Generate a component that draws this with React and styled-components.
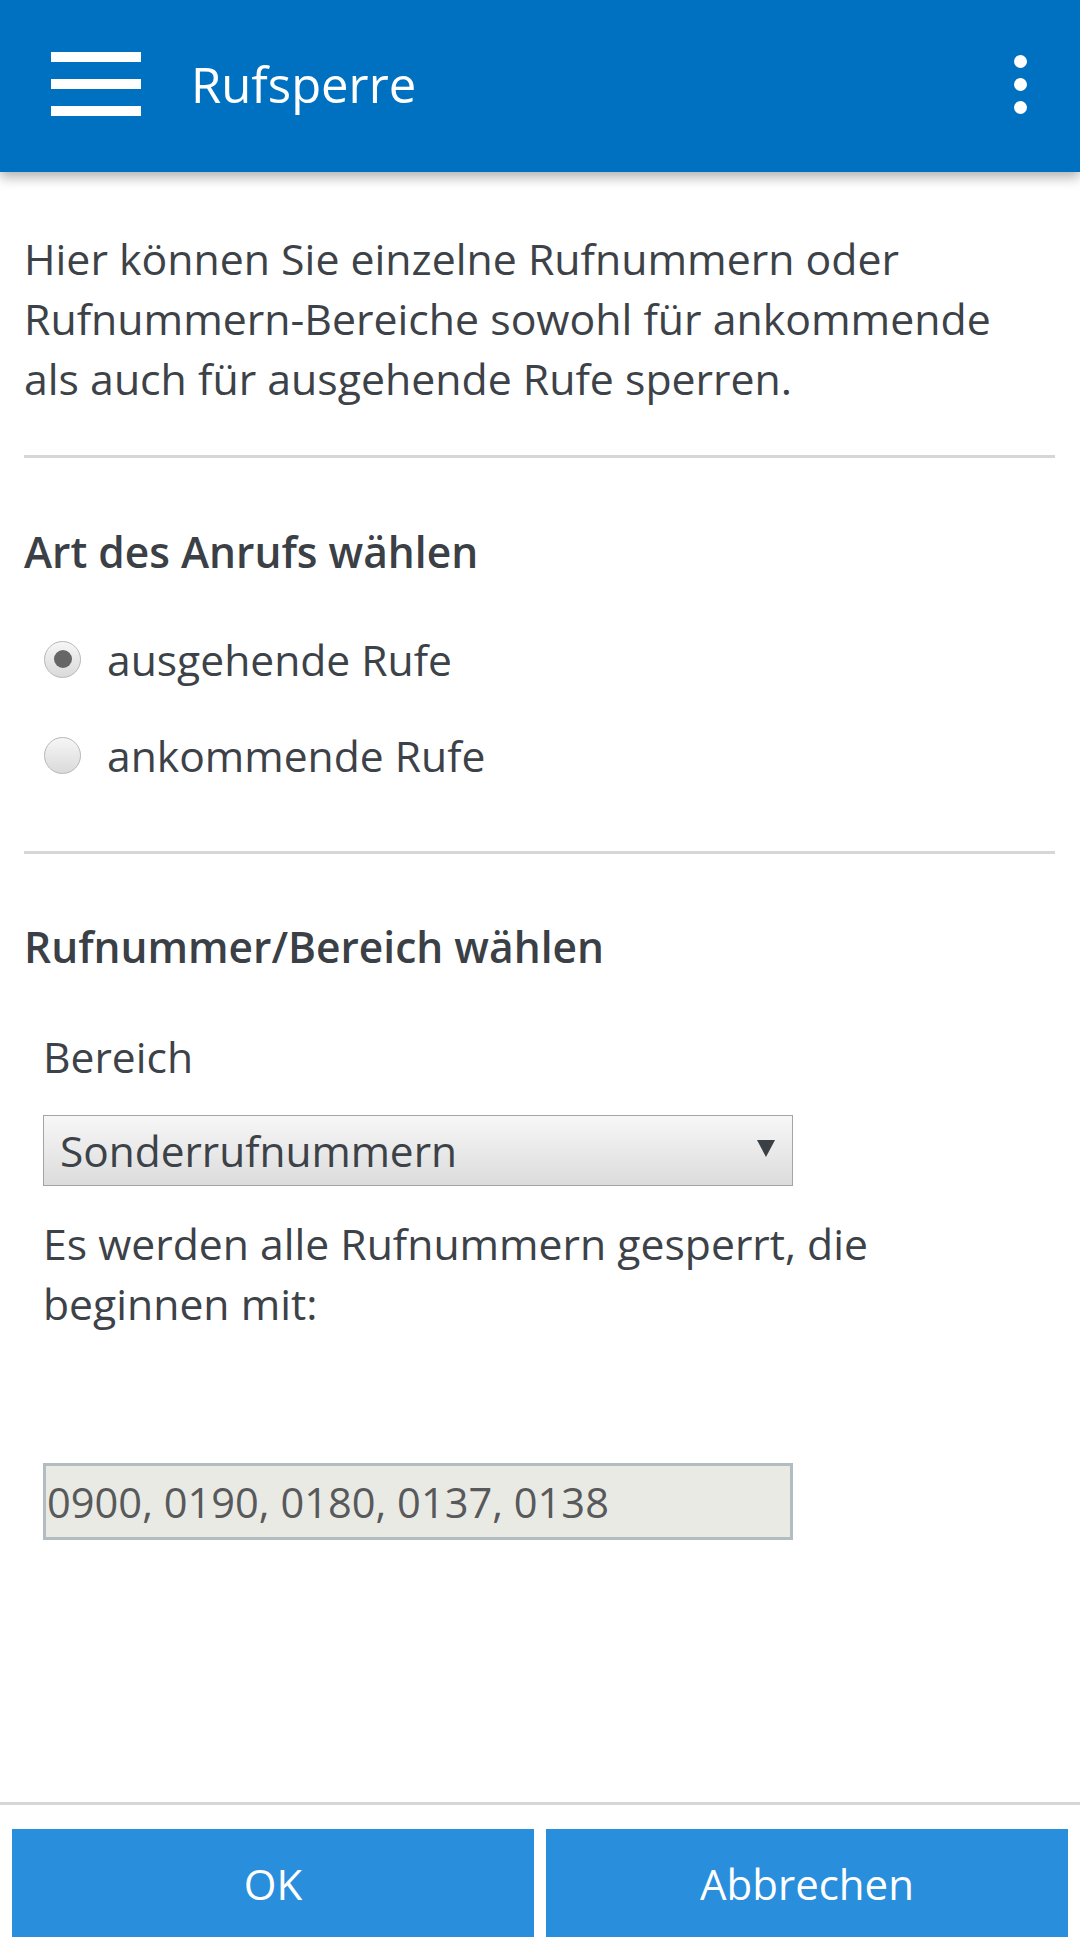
import React from 'react'
import styled, { createGlobalStyle } from 'styled-components'

const GlobalStyle = createGlobalStyle`
  html, body {
    margin: 0;
    padding: 0;
    background: #fff;
  }
  body {
    font-family: 'Open Sans', 'Noto Sans', sans-serif;
    color: #3c4247;
  }
`

const Page = styled.div`
  display: flex;
  flex-direction: column;
  min-height: 100vh;
  width: 100%;
`

const TopBar = styled.div`
  position: relative;
  z-index: 2;
  height: 172px;
  box-sizing: border-box;
  padding: 0 53px 4px 51px;
  display: flex;
  align-items: center;
  background: #0070c0;
  box-shadow: 0 5px 12px rgba(0, 0, 0, 0.32);
`

const Burger = styled.div`
  display: flex;
  flex-direction: column;
  gap: 17px;
  width: 90px;
`

const BurgerLine = styled.span`
  display: block;
  height: 10px;
  background: #fff;
`

const Title = styled.div`
  flex: 1;
  margin-left: 50px;
  font-size: 49px;
  line-height: 60px;
  color: #fff;
`

const Dots = styled.div`
  display: flex;
  flex-direction: column;
  gap: 10px;
`

const Dot = styled.span`
  display: block;
  width: 13px;
  height: 13px;
  border-radius: 50%;
  background: #fff;
`

const Content = styled.div`
  flex: 1;
  padding: 0 25px 0 24px;
`

const Intro = styled.p`
  margin: 57px 0 0;
  font-size: 42.8px;
  line-height: 60px;
`

const Divider = styled.div`
  height: 3px;
  background: #d6d6d6;
  margin-top: ${p => p.top}px;
`

const Heading = styled.h2`
  margin: ${p => p.top}px 0 0;
  font-size: 42.5px;
  line-height: 60px;
  font-weight: 600;
  color: #3a4045;
`

const RadioList = styled.div`
  margin-top: 29px;
  padding-left: 20px;
`

const RadioRow = styled.label`
  display: flex;
  align-items: center;
  height: 96px;
  font-size: 42.6px;
  line-height: 60px;
`

const RadioCircle = styled.span`
  position: relative;
  width: 37px;
  height: 37px;
  box-sizing: border-box;
  border-radius: 50%;
  border: 1px solid #b8b8b8;
  background: linear-gradient(#f6f6f6, #dadada);
  margin-right: 26px;
  flex-shrink: 0;

  &::after {
    content: '';
    display: ${p => (p.checked ? 'block' : 'none')};
    position: absolute;
    left: 50%;
    top: 50%;
    width: 18px;
    height: 18px;
    margin: -9px 0 0 -9px;
    border-radius: 50%;
    background: #666;
  }
`

const Form = styled.div`
  padding-left: 19px;
`

const FieldLabel = styled.div`
  margin-top: 49px;
  font-size: 42.6px;
  line-height: 60px;
`

const Select = styled.div`
  margin-top: 29px;
  width: 750px;
  height: 71px;
  box-sizing: border-box;
  border: 1px solid #a4a4a4;
  background: linear-gradient(#f7f7f7, #dcdcdc);
  display: flex;
  align-items: center;
  padding: 0 17px 0 16px;
  font-size: 42.4px;
  color: #3c4247;
`

const SelectText = styled.span`
  flex: 1;
`

const Caret = styled.span`
  width: 0;
  height: 0;
  border-left: 9px solid transparent;
  border-right: 9px solid transparent;
  border-top: 17px solid #3b4045;
  margin-top: -4px;
`

const Info = styled.div`
  margin-top: 28px;
  font-size: 42.7px;
  line-height: 60px;
`

const ReadOnlyField = styled.div`
  margin-top: 129px;
  width: 750px;
  height: 77px;
  box-sizing: border-box;
  border: 3px solid #b3bcc0;
  background: #eaeae5;
  display: flex;
  align-items: center;
  padding-left: 1px;
  font-size: 41.6px;
  color: #58595b;
`

const Footer = styled.div`
  border-top: 3px solid #d6d6d6;
  padding: 24px 12px 14px;
  display: flex;
  gap: 12px;
`

const Button = styled.button`
  flex: 1;
  height: 108px;
  border: none;
  border-radius: 0;
  background: #298edb;
  color: #fff;
  font-family: 'Open Sans', 'Noto Sans', sans-serif;
  font-size: 42px;
  padding: 0;
`

const callTypes = [
  { label: 'ausgehende Rufe', checked: true },
  { label: 'ankommende Rufe', checked: false }
]

export default function App() {
  return (
    <Page>
      <GlobalStyle />
      <TopBar>
        <Burger>
          <BurgerLine />
          <BurgerLine />
          <BurgerLine />
        </Burger>
        <Title>Rufsperre</Title>
        <Dots>
          <Dot />
          <Dot />
          <Dot />
        </Dots>
      </TopBar>

      <Content>
        <Intro>
          Hier können Sie einzelne Rufnummern oder<br />
          Rufnummern-Bereiche sowohl für ankommende<br />
          als auch für ausgehende Rufe sperren.
        </Intro>

        <Divider top={46} />

        <Heading top={64}>Art des Anrufs wählen</Heading>
        <RadioList>
          {callTypes.map(item => (
            <RadioRow key={item.label}>
              <RadioCircle checked={item.checked} />
              {item.label}
            </RadioRow>
          ))}
        </RadioList>

        <Divider top={48} />

        <Heading top={63}>Rufnummer/Bereich wählen</Heading>
        <Form>
          <FieldLabel>Bereich</FieldLabel>
          <Select>
            <SelectText>Sonderrufnummern</SelectText>
            <Caret />
          </Select>
          <Info>
            Es werden alle Rufnummern gesperrt, die<br />
            beginnen mit:
          </Info>
          <ReadOnlyField>0900, 0190, 0180, 0137, 0138</ReadOnlyField>
        </Form>
      </Content>

      <Footer>
        <Button>OK</Button>
        <Button>Abbrechen</Button>
      </Footer>
    </Page>
  )
}
